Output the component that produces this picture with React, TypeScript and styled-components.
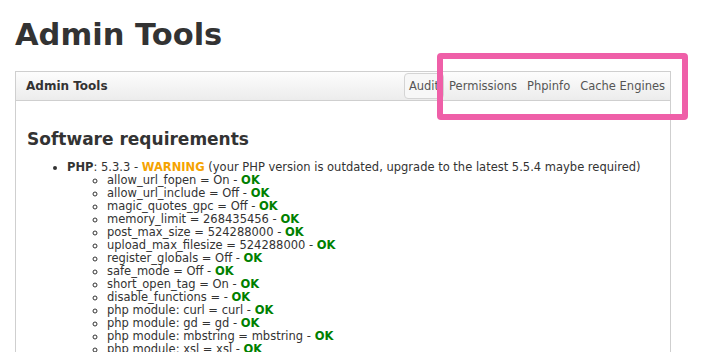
import React from "react";
import styled, { createGlobalStyle } from "styled-components";

const GlobalStyle = createGlobalStyle`
  body {
    margin: 0;
    background: #fff;
    color: #333;
    font-family: "DejaVu Sans", Verdana, sans-serif;
    font-size: 11.5px;
  }
`;

const Page = styled.div`
  position: relative;
  padding: 0 51px 0 15px;
`;

const Title = styled.h1`
  margin: 0;
  padding-top: 15px;
  font-size: 30.5px;
  line-height: 40px;
  font-weight: bold;
  color: #333;
`;

const Panel = styled.div`
  margin-top: 16px;
  border: 1px solid #cfcfcf;
`;

const PanelHeader = styled.div`
  display: flex;
  align-items: center;
  justify-content: space-between;
  height: 28px;
  padding: 0 0 0 10px;
  border-bottom: 1px solid #cfcfcf;
  background: linear-gradient(#fdfdfd, #ececec);
`;

const PanelTitle = styled.span`
  font-size: 12px;
  font-weight: bold;
  color: #333;
`;

const Tabs = styled.nav`
  display: flex;
  align-items: center;
`;

const Tab = styled.span<{ $active?: boolean }>`
  padding: 5px 4px;
  color: #555;
  font-size: 11.5px;
  border: 1px solid ${(p) => (p.$active ? "#d4d4d4" : "transparent")};
  border-radius: 4px;
  background: ${(p) => (p.$active ? "#f7f7f7" : "transparent")};
`;

const PanelBody = styled.div`
  padding: 26px 11px 0;
  height: 260px;
  overflow: hidden;
`;

const Section = styled.h2`
  margin: 0 0 10px;
  font-size: 17px;
  line-height: 24px;
  font-weight: bold;
  color: #333;
`;

const List = styled.ul`
  margin: 0;
  padding-left: 40px;
  line-height: 13px;
  list-style: disc;
`;

const SubList = styled.ul`
  margin: 0;
  padding-left: 40px;
  list-style: circle;
`;

const Label = styled.b`
  color: #333;
`;

const Status = styled.b<{ $kind: "ok" | "warning" }>`
  color: ${(p) => (p.$kind === "ok" ? "#008000" : "#f5a300")};
`;

const Highlight = styled.div`
  position: absolute;
  left: 437px;
  top: 53px;
  width: 251px;
  height: 67px;
  box-sizing: border-box;
  border: 6px solid #ef5fa8;
  border-radius: 4px;
  pointer-events: none;
`;

const checks = [
  "allow_url_fopen = On",
  "allow_url_include = Off",
  "magic_quotes_gpc = Off",
  "memory_limit = 268435456",
  "post_max_size = 524288000",
  "upload_max_filesize = 524288000",
  "register_globals = Off",
  "safe_mode = Off",
  "short_open_tag = On",
  "disable_functions = ",
  "php module: curl = curl",
  "php module: gd = gd",
  "php module: mbstring = mbstring",
  "php module: xsl = xsl",
];

export default function App() {
  return (
    <Page>
      <GlobalStyle />
      <Title>Admin Tools</Title>
      <Panel>
        <PanelHeader>
          <PanelTitle>Admin Tools</PanelTitle>
          <Tabs>
            <Tab $active>Audit</Tab>
            <Tab>Permissions</Tab>
            <Tab>Phpinfo</Tab>
            <Tab>Cache Engines</Tab>
          </Tabs>
        </PanelHeader>
        <PanelBody>
          <Section>Software requirements</Section>
          <List>
            <li>
              <Label>PHP</Label>: 5.3.3 - <Status $kind="warning">WARNING</Status>{" "}
              (your PHP version is outdated, upgrade to the latest 5.5.4 maybe
              required)
              <SubList>
                {checks.map((c) => (
                  <li key={c}>
                    {c} - <Status $kind="ok">OK</Status>
                  </li>
                ))}
              </SubList>
            </li>
          </List>
        </PanelBody>
      </Panel>
      <Highlight />
    </Page>
  );
}
